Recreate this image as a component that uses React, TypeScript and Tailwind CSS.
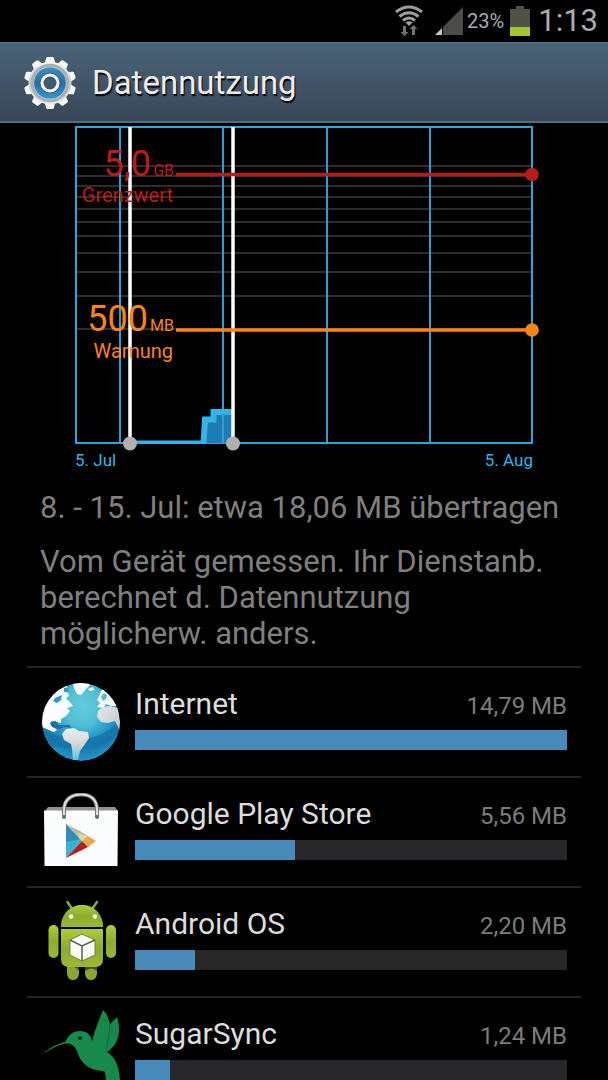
import type { ReactNode } from 'react';

interface AppUsage {
  id: number;
  name: string;
  usage: string;
  percent: number;
  icon: ReactNode;
}

function GearIcon() {
  const teeth = [0, 36, 72, 108, 144, 180, 216, 252, 288, 324];
  return (
    <svg className="w-[52px] h-[54px] shrink-0" viewBox="-26 -27 52 54" aria-hidden="true">
      <defs>
        <linearGradient id="gearMetal" x1="0" y1="-26" x2="0" y2="26" gradientUnits="userSpaceOnUse">
          <stop offset="0" stopColor="#ffffff" />
          <stop offset="0.5" stopColor="#c9cccd" />
          <stop offset="1" stopColor="#f2f2f2" />
        </linearGradient>
        <linearGradient id="gearBlue" x1="0" y1="0" x2="0" y2="1">
          <stop offset="0" stopColor="#3a92c6" />
          <stop offset="0.5" stopColor="#236fa5" />
          <stop offset="1" stopColor="#2f9bd0" />
        </linearGradient>
      </defs>
      {teeth.map(angle => (
        <path key={angle} d="M-5.5-19 -3.8-25Q-3.5-26-2.5-26H2.5Q3.5-26 3.8-25L5.5-19Z" fill="url(#gearMetal)" transform={`rotate(${angle})`} />
      ))}
      <circle r="21.5" fill="url(#gearMetal)" />
      <circle r="17.8" fill="none" stroke="#a9aeb1" strokeWidth="3" />
      <circle r="15.8" fill="url(#gearBlue)" />
      <circle r="8" fill="#2c6b96" stroke="#4b5458" strokeWidth="4.5" />
      <circle r="8" fill="none" stroke="#f4f4f4" strokeWidth="3" />
      <circle r="5.8" fill="#405b70" />
    </svg>
  );
}

function GlobeIcon() {
  return (
    <svg className="w-[78px] h-[78px]" viewBox="0 0 78 78" aria-hidden="true">
      <defs>
        <radialGradient id="sea" cx="0.52" cy="0.3" r="0.7">
          <stop offset="0" stopColor="#63cbd9" />
          <stop offset="0.35" stopColor="#4fbfd6" />
          <stop offset="0.6" stopColor="#2199c9" />
          <stop offset="0.8" stopColor="#1b7bb0" />
          <stop offset="1" stopColor="#1d9bcb" />
        </radialGradient>
        <linearGradient id="land" x1="0" y1="0" x2="0" y2="1">
          <stop offset="0" stopColor="#eeeeee" />
          <stop offset="0.5" stopColor="#d3d6d8" />
          <stop offset="1" stopColor="#5cc6da" />
        </linearGradient>
        <linearGradient id="africa" x1="0" y1="0" x2="1" y2="1">
          <stop offset="0" stopColor="#e6e7e8" />
          <stop offset="1" stopColor="#c3c7ca" />
        </linearGradient>
        <clipPath id="globeClip"><circle cx="39" cy="39" r="39" /></clipPath>
      </defs>
      <g clipPath="url(#globeClip)">
        <circle cx="39" cy="39" r="39" fill="url(#sea)" />
        <path d="M0 46Q14 55 38 56Q64 54 75 39L78 46Q70 61 48 66L10 64Z" fill="#1672a7" opacity="0.75" />
        <path d="M0 44L7 47 12 49 15 47 10 43 8 40 10 38 15 39 19 40 19 36 24 33 28 28 25 25 31 23 27 18 24 16 27 12 24 8 27 5 22 1 0 10Z" fill="#fbfcfd" />
        <path d="M13 15L20 12 19 17 15 20 11 18ZM22 5L27 4 26 9 22 9Z" fill="#2b9ac6" />
        <path d="M31 0L32 5 35 11 39 12 44 6 48 2 46 0ZM46 6L51 4 52 7 48 8Z" fill="#fbfcfd" />
        <path d="M59 8L57 13 55 17 58 20 55 24 61 25 64 21 69 23 76 23 70 10 63 4Z" fill="#fbfcfd" />
        <path d="M62 10L65 12 64 16 61 18 59 14Z" fill="#4ebbd0" />
        <path d="M56 28L61 24 68 23 76 25 79 46 77 46 73 38 66 40 59 39 55 34Z" fill="url(#africa)" />
        <path d="M20 51L24 46 32 45 37 48 46 49 47 55 43 61 38 68 36 77 31 77 30 66 29 61 22 57Z" fill="url(#land)" />
        <path d="M8 40L14 38 16 42 27 42 30 45 23 44 17 46 10 44Z" fill="#1c6e9c" />
      </g>
    </svg>
  );
}

function PlayStoreIcon() {
  return (
    <svg className="w-[78px] h-[78px]" viewBox="0 3 78 78" aria-hidden="true">
      <path d="M6 17H73L76 21H3Z" fill="#8f9193" />
      <path d="M2 20.500H76L75.500 76H2.500Z" fill="#fbfcfe" />
      <path d="M22 27V20C22 9 30 4.500 39 4.500S55 9 55 20V27" fill="none" stroke="#77797b" strokeWidth="4" />
      <path d="M22 25V20C22 9 30 4.500 39 4.500S55 9 55 20V25" fill="none" stroke="#dfe0e2" strokeWidth="2" />
      <circle cx="22" cy="27" r="2" fill="#6b6d70" />
      <circle cx="55" cy="27" r="2" fill="#6b6d70" />
      <path d="M24 34L40 51 24 68Z" fill="#3bb0cf" />
      <path d="M24 34L38 49 24 52Z" fill="#2f8db8" />
      <path d="M24 34L38 41 46 46 40 51Z" fill="#b9bbae" />
      <path d="M36 43L46 46 41 51 37 48Z" fill="#dedb98" />
      <path d="M46 46L54 51 46 57 40 51Z" fill="#e5ab4b" />
      <path d="M24 68L40 51 46 57Z" fill="#b61c1c" />
    </svg>
  );
}

function AndroidIcon() {
  return (
    <svg className="w-[78px] h-[80px]" viewBox="0 3 78 80" overflow="visible" aria-hidden="true">
      <defs>
        <linearGradient id="droid" x1="0" y1="0" x2="0" y2="1">
          <stop offset="0" stopColor="#b0cc3f" />
          <stop offset="0.5" stopColor="#8dac2c" />
          <stop offset="1" stopColor="#9bb935" />
        </linearGradient>
      </defs>
      <path d="M25.500 2L30 9M55 2L50 9" stroke="#8faa31" strokeWidth="2.500" strokeLinecap="round" />
      <path d="M19 27C19 13 29 5 40 5S61 13 61 27Z" fill="url(#droid)" />
      <circle cx="29" cy="16.500" r="2.200" fill="#ffffff" />
      <circle cx="53" cy="16.500" r="2.200" fill="#ffffff" />
      <rect x="6.500" y="25" width="10" height="33" rx="5" fill="url(#droid)" />
      <rect x="64" y="25" width="10" height="33" rx="5" fill="url(#droid)" />
      <path d="M25 60H37V74Q36 80 31 80T25 74ZM43 60H55V74Q54 80 49 80T43 74Z" fill="#8ba52f" />
      <path d="M25 66H37V71Q34 66 25 66ZM43 66H55V71Q50 66 43 71Z" fill="#4a4b2c" />
      <path d="M19 29H61V59Q61 67 53 67H27Q19 67 19 59Z" fill="url(#droid)" />
      <path d="M40 34L53 40V55L40 61 28 55V40Z" fill="#fbfbfb" stroke="#6f853a" strokeWidth="1" />
      <path d="M28 40L40 46 53 40M40 46V61" fill="none" stroke="#59624d" strokeWidth="1.500" />
    </svg>
  );
}

function HummingbirdIcon() {
  return (
    <svg className="w-[78px] h-[78px]" viewBox="0 4 78 78" overflow="visible" aria-hidden="true">
      <path
        d="M1 45C7 39 15 35 23 33C27 25 32 22 38 22C45 22 49 26 50 32C52 24 56 13 61 1C65 5 67 10 68 15L75 8C79 20 78 35 65 43C74 48 79 60 78 82H64C63 73 65 67 62 62C49 62 39 56 35 42C31 34 26 34 21 35C14 37 7 41 1 45Z"
        fill="#178a4b"
      />
      <path d="M68 15C68 25 65 34 64 42" fill="none" stroke="#126a3b" strokeWidth="1" />
      <circle cx="38" cy="29" r="1.800" fill="#07170e" />
    </svg>
  );
}

const apps: AppUsage[] = [
  { id: 1, name: 'Internet', usage: '14,79 MB', percent: 100, icon: <GlobeIcon /> },
  { id: 2, name: 'Google Play Store', usage: '5,56 MB', percent: 37, icon: <PlayStoreIcon /> },
  { id: 3, name: 'Android OS', usage: '2,20 MB', percent: 14, icon: <AndroidIcon /> },
  { id: 4, name: 'SugarSync', usage: '1,24 MB', percent: 8, icon: <HummingbirdIcon /> },
];

function StatusBar() {
  return (
    <div className="flex h-[42px] shrink-0 items-center justify-end bg-black pr-[10px] text-[#a9abad]">
      <svg className="mr-3 h-8 w-7" viewBox="0 0 28 32" aria-hidden="true">
        <g fill="none" stroke="#9b9d9e" strokeWidth="3">
          <path d="M1 7Q14-3 27 7" />
          <path d="M4.500 11.500Q14 4 23.500 11.500" />
          <path d="M8 15.500Q14 10.500 20 15.500" />
        </g>
        <path d="M10.500 17.500Q14 15 17.500 17.500L14 21Z" fill="#9b9d9e" />
        <path d="M8 21H11V27H13.500L9.500 31 5.500 27H8ZM17 30H20V24H22.500L18.500 20 14.500 24H17Z" fill="#717371" />
      </svg>
      <svg className="mr-1 h-7 w-7" viewBox="0 0 28 28" aria-hidden="true">
        <path d="M0 28L7 21V28Z" fill="#c5c7c9" />
        <path d="M8 28V20L28 0V28Z" fill="#4b4c46" />
      </svg>
      <span className="mr-[6px] text-xl">23%</span>
      <svg className="mr-2 h-[30px] w-5" viewBox="0 0 20 30" aria-hidden="true">
        <path d="M6 0H14V3H20V30H0V3H6Z" fill="#50524a" />
        <path d="M0 21H20V30H0Z" fill="#a2c62c" />
      </svg>
      <span className="text-[31px] leading-10">1:13</span>
    </div>
  );
}

function UsageChart() {
  const gridRows = [40, 50, 60, 71, 83, 96, 110, 127, 146, 170, 203];
  const weeks = [45, 148, 252, 355];

  return (
    <div className="px-[75px] pt-[3px]">
      <svg className="block w-full overflow-visible" viewBox="0 0 458 318" role="img" aria-label="Datennutzung">
        {gridRows.map(y => (
          <path key={y} d={`M1 ${y}H457`} stroke="#2d2d2d" strokeWidth="2" />
        ))}
        {weeks.map(x => (
          <path key={x} d={`M${x} 1V317`} stroke="#2f9fd0" strokeWidth="2" />
        ))}
        <rect x="1" y="1" width="456" height="316" fill="none" stroke="#2fa6d6" strokeWidth="2" />

        {/* Verbrauch im gewählten Zeitraum */}
        <path d="M128 317L130 292H138V284H158V317Z" fill="#1e7cb4" />
        <path d="M55 316H128" stroke="#33b5e5" strokeWidth="3" />
        <path d="M128.500 317.500L130 293.500H138.500V286H158" fill="none" stroke="#33b5e5" strokeWidth="6" />
        <path d="M148 288V317" stroke="#2f9fd0" strokeWidth="2" />

        <path d="M55 1V317M158 1V317" stroke="#ffffff" strokeWidth="3.500" />
        <circle cx="55" cy="317.500" r="7" fill="#b0b0b0" />
        <circle cx="158" cy="317.500" r="7" fill="#b0b0b0" />

        <path d="M101 48.500H457" stroke="#b71c1c" strokeWidth="3.500" />
        <circle cx="457" cy="48.500" r="6.800" fill="#b71c1c" />
        <path d="M101 204H457" stroke="#f98613" strokeWidth="3.500" />
        <circle cx="457" cy="204" r="6.800" fill="#f98613" />

        <g fill="#bd1a1c" textAnchor="end">
          <text x="76" y="50" fontSize="36">5,0</text>
          <text x="99" y="50" fontSize="16">GB</text>
          <text x="98" y="76" fontSize="20">Grenzwert</text>
        </g>
        <g fill="#f98613" textAnchor="end">
          <text x="73" y="205" fontSize="36">500</text>
          <text x="99" y="205" fontSize="16">MB</text>
          <text x="98" y="232" fontSize="20">Warnung</text>
        </g>
      </svg>
      <div className="flex justify-between pt-1 text-[17px] leading-6 text-[#33b5e5]">
        <span>5. Jul</span>
        <span>5. Aug</span>
      </div>
    </div>
  );
}

function AppRow({ app }: { app: AppUsage }) {
  return (
    <li className="flex h-[110px] gap-[15px] border-t-2 border-[#232326] px-[14px] pt-[15px]">
      <div className="w-[79px] shrink-0 pl-px">{app.icon}</div>
      <div className="min-w-0 flex-1">
        <div className="flex items-baseline justify-between leading-[42px]">
          <span className="text-[30px] leading-[42px] text-[#dcdcdc]">{app.name}</span>
          <span className="text-2xl leading-[42px] text-[#7c7c7c]">{app.usage}</span>
        </div>
        <div className="mt-[3px] h-5 bg-[#27272a]">
          <div className="h-full bg-[#488ab9]" style={{ width: `${app.percent}%` }} />
        </div>
      </div>
    </li>
  );
}

function App() {
  return (
    <div className="flex h-screen flex-col overflow-hidden bg-black font-[Roboto,sans-serif]">
      <StatusBar />
      <header className="flex h-[81px] shrink-0 items-center gap-4 border-y-2 border-[#4e6c84] bg-linear-to-b from-[#4b6377] to-[#384757] pl-6">
        <GearIcon />
        <h1 className="text-[33px] text-[#ececec] text-shadow-[1px_2px_1px_#000000]">Datennutzung</h1>
      </header>

      <main className="min-h-0 flex-1 overflow-y-auto [scrollbar-width:none]">
        <UsageChart />
        <div className="px-10 text-[31px] leading-9 text-[#7f7f7f]">
          <p className="pt-[18px]">8. - 15. Jul: etwa 18,06 MB übertragen</p>
          <p className="pt-[18px]">Vom Gerät gemessen. Ihr Dienstanb. berechnet d. Datennutzung möglicherw. anders.</p>
        </div>
        <ul className="mx-[27px] mt-[14px]">
          {apps.map(app => (
            <AppRow key={app.id} app={app} />
          ))}
        </ul>
      </main>
    </div>
  );
}

export default App;
